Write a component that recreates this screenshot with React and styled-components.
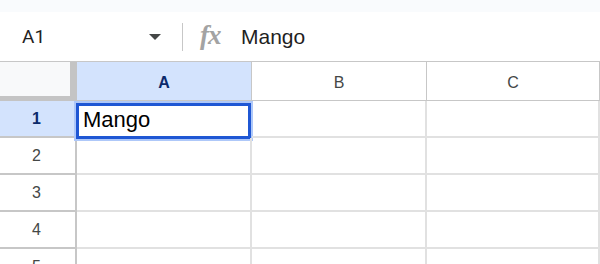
import styled, { createGlobalStyle } from "styled-components";

const Global = createGlobalStyle`
  html, body {
    margin: 0;
    padding: 0;
    background: #ffffff;
    overflow: hidden;
  }
  * { box-sizing: border-box; }
`;

const Page = styled.div`
  width: 600px;
  height: 264px;
  overflow: hidden;
  display: flex;
  flex-direction: column;
  font-family: "Liberation Sans", Arial, sans-serif;
`;

const TopStrip = styled.div`
  height: 12px;
  flex: none;
  background: #f9fbfd;
`;

const FormulaBar = styled.div`
  height: 50px;
  flex: none;
  display: flex;
  align-items: center;
  background: #ffffff;
  border-bottom: 1px solid #c7c7c7;
`;

const NameBox = styled.div`
  width: 182px;
  height: 100%;
  display: flex;
  align-items: center;
  padding-left: 22px;
  padding-right: 21px;
  font-family: Roboto, "Liberation Sans", sans-serif;
  font-size: 19px;
  color: #1f1f1f;
`;

const NameText = styled.span`
  flex: 1;
`;

const Caret = styled.span`
  width: 0;
  height: 0;
  border-left: 6px solid transparent;
  border-right: 6px solid transparent;
  border-top: 6px solid #444746;
`;

const Divider = styled.div`
  width: 1px;
  height: 28px;
  background: #c7c7c7;
`;

const Fx = styled.span`
  margin-left: 17px;
  width: 41px;
  font-family: "Liberation Serif", "DejaVu Serif", serif;
  font-style: italic;
  font-weight: 700;
  font-size: 27px;
  color: #a3a3a3;
  letter-spacing: -1px;
  line-height: 1;
  padding-bottom: 2px;
`;

const FormulaText = styled.span`
  font-size: 21px;
  color: #1f1f1f;
`;

const Sheet = styled.div`
  display: grid;
  grid-template-columns: 77px 175px 175px 173px;
  grid-template-rows: 39px repeat(5, 37px);
`;

const Corner = styled.div`
  background: #f8f9fa;
  border-right: 7px solid #c4c4c4;
  border-bottom: 5px solid #c4c4c4;
`;

const ColHead = styled.div`
  display: flex;
  align-items: center;
  justify-content: center;
  padding-top: 3px;
  font-size: 16px;
  background: ${(p) => (p.$active ? "#d3e3fd" : "#ffffff")};
  color: ${(p) => (p.$active ? "#0b2a6b" : "#444746")};
  font-weight: ${(p) => (p.$active ? 700 : 400)};
  border-right: 1px solid #c7c7c7;
  border-bottom: 1px solid #c7c7c7;
`;

const RowHead = styled.div`
  display: flex;
  align-items: center;
  justify-content: center;
  font-size: 16px;
  padding-right: 2px;
  background: ${(p) => (p.$active ? "#d3e3fd" : "#ffffff")};
  color: ${(p) => (p.$active ? "#0b2a6b" : "#444746")};
  font-weight: ${(p) => (p.$active ? 700 : 400)};
  border-right: 2px solid #c7c7c7;
  border-bottom: 2px solid #c7c7c7;
`;

const Cell = styled.div`
  position: relative;
  display: flex;
  align-items: center;
  padding-left: 6px;
  padding-top: 2px;
  font-size: 22px;
  color: #000000;
  border-right: 2px solid #e1e1e1;
  border-bottom: 2px solid #e1e1e1;
`;

const Selection = styled.div`
  position: absolute;
  left: -1px;
  top: 2px;
  right: -1px;
  bottom: -3px;
  border: 3px solid #1f57d4;
  box-shadow: 0 0 0 2px #aec8f9;
  pointer-events: none;
`;

const cols = ["A", "B", "C"];
const rows = [1, 2, 3, 4, 5];
const data = { A1: "Mango" };
const active = "A1";

export default function App() {
  return (
    <Page>
      <Global />
      <TopStrip />
      <FormulaBar>
        <NameBox>
          <NameText>A1</NameText>
          <Caret />
        </NameBox>
        <Divider />
        <Fx>fx</Fx>
        <FormulaText>{data[active]}</FormulaText>
      </FormulaBar>
      <Sheet>
        <Corner />
        {cols.map((c) => (
          <ColHead key={c} $active={c === "A"}>
            {c}
          </ColHead>
        ))}
        {rows.map((r) => [
          <RowHead key={"h" + r} $active={r === 1}>
            {r}
          </RowHead>,
          ...cols.map((c) => (
            <Cell key={c + r}>
              {data[c + r]}
              {c + r === active && <Selection />}
            </Cell>
          )),
        ])}
      </Sheet>
    </Page>
  );
}
